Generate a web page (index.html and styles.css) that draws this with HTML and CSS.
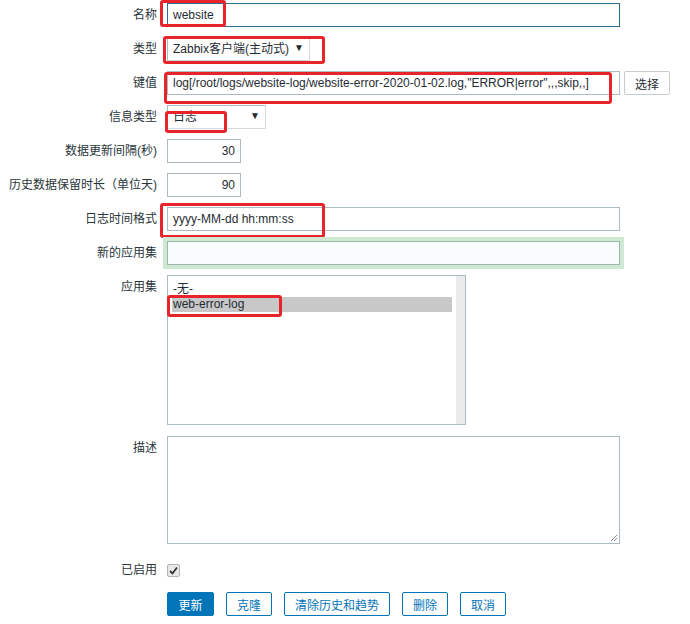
FILE: index.html
```html
<!DOCTYPE html>
<html lang="zh-CN">
<head>
    <meta charset="UTF-8">
    <title>监控项</title>
    <link rel="stylesheet" href="styles.css">
</head>
<body>
    <form class="item-form">
        <div class="row">
            <label class="label">名称</label>
            <div class="field">
                <div class="input wide focused">website</div>
                <span class="mark mark-name"></span>
            </div>
        </div>

        <div class="row">
            <label class="label">类型</label>
            <div class="field">
                <div class="select select-type">Zabbix客户端(主动式)<span class="arrow">▼</span></div>
                <span class="mark mark-type"></span>
            </div>
        </div>

        <div class="row">
            <label class="label">键值</label>
            <div class="field inline">
                <div class="input wide">log[/root/logs/website-log/website-error-2020-01-02.log,"ERROR|error",,,skip,,]</div>
                <button type="button" class="btn-select">选择</button>
                <span class="mark mark-key"></span>
            </div>
        </div>

        <div class="row">
            <label class="label">信息类型</label>
            <div class="field">
                <div class="select select-info">日志<span class="arrow">▼</span></div>
                <span class="mark mark-info"></span>
            </div>
        </div>

        <div class="row">
            <label class="label">数据更新间隔(秒)</label>
            <div class="field">
                <div class="input short">30</div>
            </div>
        </div>

        <div class="row">
            <label class="label">历史数据保留时长（单位天)</label>
            <div class="field">
                <div class="input short">90</div>
            </div>
        </div>

        <div class="row">
            <label class="label">日志时间格式</label>
            <div class="field">
                <div class="input wide">yyyy-MM-dd hh:mm:ss</div>
                <span class="mark mark-format"></span>
            </div>
        </div>

        <div class="row">
            <label class="label">新的应用集</label>
            <div class="field">
                <div class="input wide glow"></div>
            </div>
        </div>

        <div class="row row-apps">
            <label class="label">应用集</label>
            <div class="field">
                <div class="listbox">
                    <div class="options">
                        <div class="option">-无-</div>
                        <div class="option selected">web-error-log</div>
                    </div>
                    <div class="scrollbar"></div>
                    <span class="mark mark-app"></span>
                </div>
            </div>
        </div>

        <div class="row row-desc">
            <label class="label">描述</label>
            <div class="field">
                <div class="textarea">
                    <svg class="grip" width="8" height="8" viewBox="0 0 8 8">
                        <path d="M7 1 L1 7 M7 4 L4 7" stroke="#888" stroke-width="1" fill="none"/>
                    </svg>
                </div>
            </div>
        </div>

        <div class="row row-check">
            <label class="label">已启用</label>
            <div class="field">
                <span class="checkbox">
                    <svg width="9" height="9" viewBox="0 0 9 9">
                        <path d="M1 5 L3.5 7.5 L8 1.5" stroke="#333" stroke-width="1.8" fill="none"/>
                    </svg>
                </span>
            </div>
        </div>

        <div class="row row-buttons">
            <span></span>
            <div class="buttons">
                <button type="button" class="btn primary">更新</button>
                <button type="button" class="btn">克隆</button>
                <button type="button" class="btn">清除历史和趋势</button>
                <button type="button" class="btn">删除</button>
                <button type="button" class="btn">取消</button>
            </div>
        </div>
    </form>
</body>
</html>
```

FILE: styles.css
```css
body {
    margin: 0;
    background-color: #fff;
    font-family: "Liberation Sans", Arial, "Noto Sans CJK SC", sans-serif;
    font-size: 12px;
    color: #1f2c33;
}

.item-form {
    padding-top: 3px;
}

.row {
    display: grid;
    grid-template-columns: 157px 1fr;
    column-gap: 10px;
    margin-bottom: 10px;
}

.label {
    text-align: right;
    line-height: 24px;
    white-space: nowrap;
    color: #2a353b;
}

.field {
    position: relative; /* red marks sit over the fields */
}

.field.inline {
    display: flex;
    gap: 4px;
}

.input {
    box-sizing: border-box;
    height: 24px;
    line-height: 22px;
    padding: 0 5px;
    border: 1px solid #acbbc2;
    background-color: #fff;
    white-space: nowrap;
    overflow: hidden;
}

.input.wide {
    width: 453px;
}

.input.short {
    width: 74px;
    text-align: right;
}

.input.focused {
    border-color: #2e6b8c;
}

.input.glow {
    background-color: #f8fcfe;
    border-color: #9fb5a8;
    box-shadow: 0 0 0 4px #cfe8d4;
}

.select {
    box-sizing: border-box;
    height: 24px;
    line-height: 22px;
    padding: 0 5px;
    border: 1px solid #d4dadd;
    border-left-color: #acbbc2;
    border-top-color: #acbbc2;
    background-color: #fff;
    position: relative;
}

.select-type {
    width: 143px;
}

.select-info {
    width: 99px;
}

.arrow {
    position: absolute;
    right: 5px;
    top: -1px;
    font-size: 10px;
    color: #1f2c33;
}

.btn-select {
    box-sizing: border-box;
    height: 24px;
    width: 46px;
    font-family: inherit;
    font-size: 12px;
    color: #1f2c33;
    background-color: #fff;
    border: 1px solid #c5cdd1;
    border-radius: 2px;
}

.row-apps {
    margin-bottom: 11px;
}

.listbox {
    box-sizing: border-box;
    width: 299px;
    height: 150px;
    border: 1px solid #acbbc2;
    display: flex;
    position: relative;
}

.options {
    flex: 1;
    padding: 6px 4px 0 4px;
}

.option {
    height: 15px;
    line-height: 15px;
    padding-left: 1px;
}

.option.selected {
    background-color: #c8c8c8;
}

.scrollbar {
    width: 9px;
    background-color: #ebebeb;
}

.row-desc {
    margin-bottom: 19px;
}

.textarea {
    box-sizing: border-box;
    width: 453px;
    height: 108px;
    border: 1px solid #acbbc2;
    position: relative;
}

.grip {
    position: absolute;
    right: 1px;
    bottom: 1px;
}

.row-check {
    margin-bottom: 15px;
}

.row-check .label {
    line-height: 14px;
}

.checkbox {
    box-sizing: border-box;
    display: flex;
    align-items: center;
    justify-content: center;
    width: 13px;
    height: 13px;
    border: 1px solid #b5b5b5;
    border-radius: 2px;
    background-color: #e8e8e8;
    margin-top: 1px;
}

.buttons {
    display: flex;
    gap: 12px;
}

.btn {
    box-sizing: border-box;
    height: 24px;
    padding: 0 10px;
    font-family: inherit;
    font-size: 12px;
    color: #0275b8;
    background-color: #fff;
    border: 1px solid #0275b8;
    border-radius: 2px;
}

.btn.primary {
    color: #fff;
    background-color: #0275b8;
    width: 47px;
}

/* red annotation boxes */
.mark {
    position: absolute;
    box-sizing: border-box;
    border: 3px solid #e8232a;
    border-radius: 3px;
}

.mark-name {
    left: -7px;
    top: -3px;
    width: 66px;
    height: 27px;
}

.mark-type {
    left: -4px;
    top: -1px;
    width: 162px;
    height: 28px;
}

.mark-key {
    left: -3px;
    top: 1px;
    width: 448px;
    height: 32px;
}

.mark-info {
    left: -2px;
    top: 6px;
    width: 62px;
    height: 22px;
}

.mark-format {
    left: -7px;
    top: -4px;
    width: 165px;
    height: 35px;
}

.mark-app {
    left: -1px;
    top: 19px;
    width: 115px;
    height: 22px;
}
```
